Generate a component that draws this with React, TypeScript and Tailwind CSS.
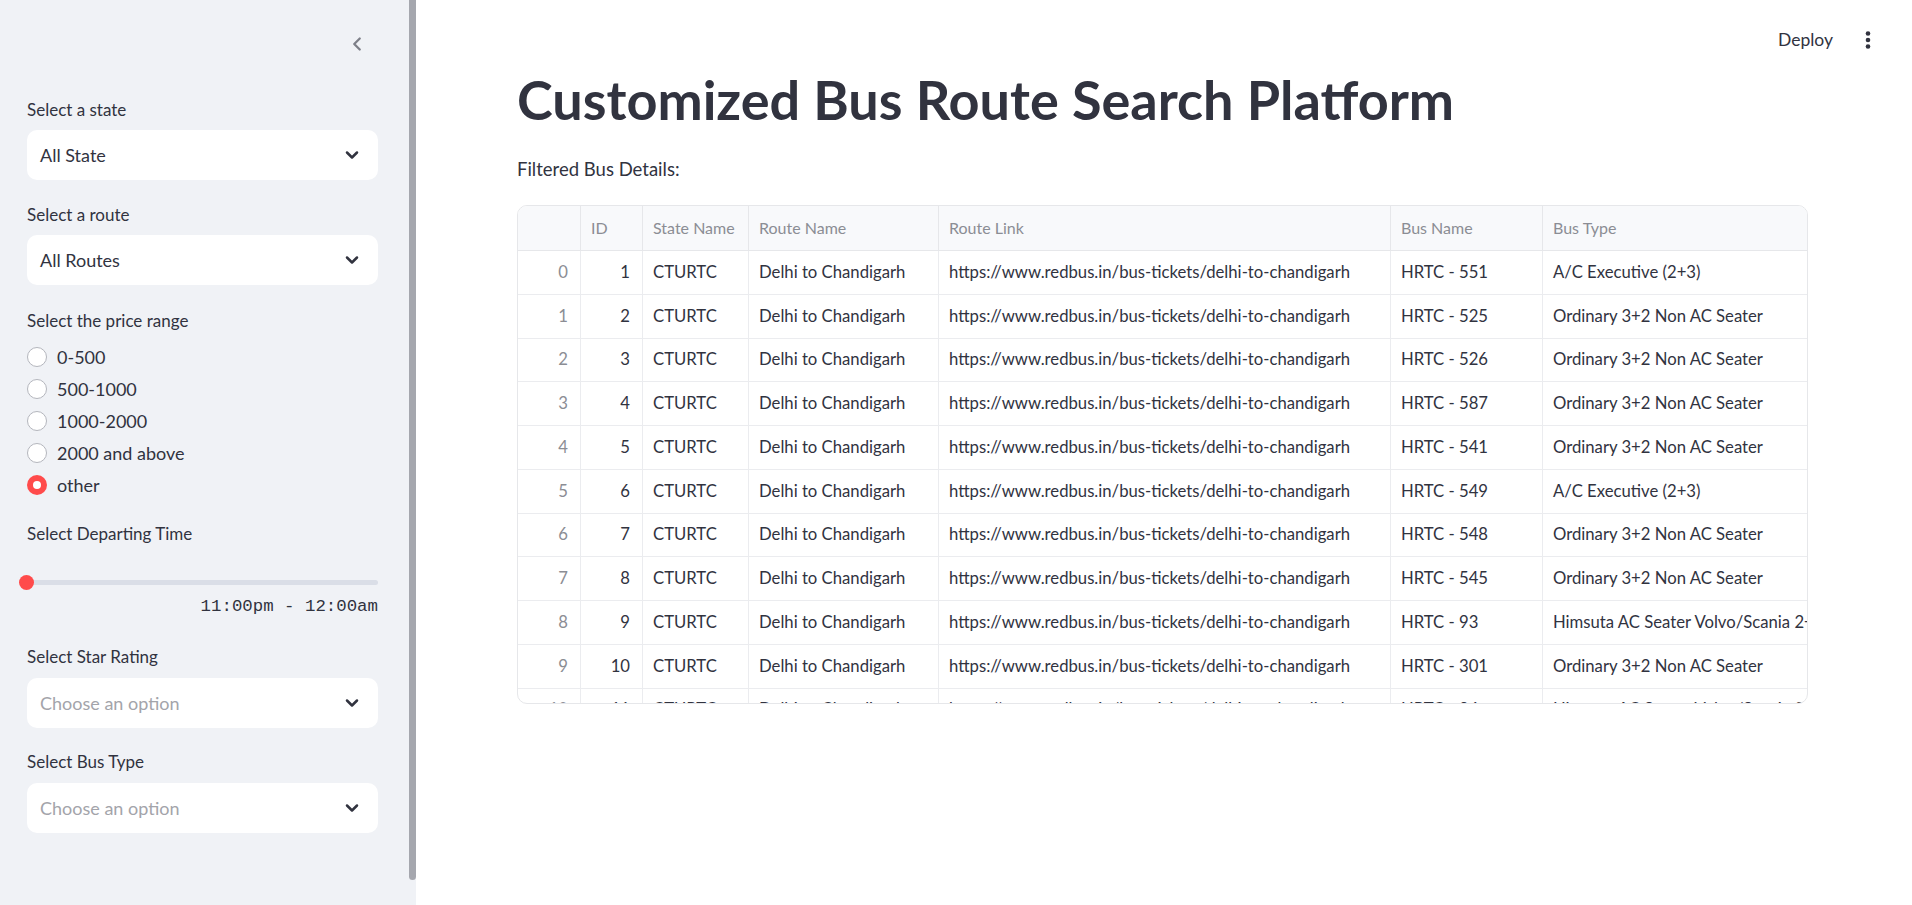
import React from "react";
import { ChevronLeft, ChevronDown } from "lucide-react";

const url = "https://www.redbus.in/bus-tickets/delhi-to-chandigarh";
const ordinary = "Ordinary 3+2 Non AC Seater";
const executive = "A/C Executive (2+3)";

const rows = [
  { bus: "HRTC - 551", type: executive },
  { bus: "HRTC - 525", type: ordinary },
  { bus: "HRTC - 526", type: ordinary },
  { bus: "HRTC - 587", type: ordinary },
  { bus: "HRTC - 541", type: ordinary },
  { bus: "HRTC - 549", type: executive },
  { bus: "HRTC - 548", type: ordinary },
  { bus: "HRTC - 545", type: ordinary },
  { bus: "HRTC - 93", type: "Himsuta AC Seater Volvo/Scania 2+2" },
  { bus: "HRTC - 301", type: ordinary },
  { bus: "HRTC - 94", type: "Himsuta AC Seater Volvo/Scania 2+2" },
];

const prices = ["0-500", "500-1000", "1000-2000", "2000 and above", "other"];

// --- sidebar pieces ---
const Label = ({ text, className = "" }: { text: string; className?: string }) => (
  <p className={`h-[22px] text-[17px] leading-[22px] text-[#31333f] ${className}`}>{text}</p>
);

const SelectBox = ({ value, placeholder = false, className = "" }: { value: string; placeholder?: boolean; className?: string }) => (
  <div className={`flex h-[50px] items-center justify-between rounded-[10px] bg-white pl-[13px] pr-[16px] ${className}`}>
    <span className={`text-[18px] ${placeholder ? "text-[#a3a4aa]" : "text-[#31333f]"}`}>{value}</span>
    <ChevronDown size={20} strokeWidth={3} className="text-[#31333f]" />
  </div>
);

const Radio = ({ label, checked }: { label: string; checked?: boolean }) => (
  <div className="flex h-[32px] items-center gap-[10px]">
    {checked ? (
      <span className="flex h-[20px] w-[20px] items-center justify-center rounded-full bg-[#ff4b4b]">
        <span className="h-[8px] w-[8px] rounded-full bg-white" />
      </span>
    ) : (
      <span className="h-[20px] w-[20px] rounded-full border border-[#b4b6bd] bg-white" />
    )}
    <span className="text-[18px] text-[#31333f]">{label}</span>
  </div>
);

const Sidebar = () => (
  <aside className="flex h-full w-[416px] shrink-0 bg-[#f0f2f6]">
    <div className="flex w-[409px] flex-col pl-[27px] pr-[31px]">
      <div className="flex h-[88px] items-center justify-end pr-[10px]">
        <ChevronLeft size={22} strokeWidth={2.5} className="text-[#7d7f88]" />
      </div>

      <Label text="Select a state" className="mt-[11px]" />
      <SelectBox value="All State" className="mt-[9px]" />

      <Label text="Select a route" className="mt-[24px]" />
      <SelectBox value="All Routes" className="mt-[9px]" />

      <Label text="Select the price range" className="mt-[25px]" />
      <div className="mt-[9px] flex flex-col">
        {prices.map((p) => (
          <Radio key={p} label={p} checked={p === "other"} />
        ))}
      </div>

      <Label text="Select Departing Time" className="mt-[22px]" />
      <div className="mt-[27px] flex h-[20px] items-center">
        <div className="relative h-[5px] w-full rounded-full bg-[#dadee7]">
          <span className="absolute -left-[8px] -top-[5px] h-[15px] w-[15px] rounded-full bg-[#ff4b4b]" />
        </div>
      </div>
      <p className="mt-[4px] h-[22px] text-right font-['Liberation_Mono',monospace] text-[17.4px] leading-[22px] text-[#31333f]">
        11:00pm - 12:00am
      </p>

      <Label text="Select Star Rating" className="mt-[28px]" />
      <SelectBox value="Choose an option" placeholder className="mt-[10px]" />

      <Label text="Select Bus Type" className="mt-[23px]" />
      <SelectBox value="Choose an option" placeholder className="mt-[10px]" />
    </div>
    <div className="w-[7px]">
      <div className="h-[880px] rounded-b-full bg-[#a5a7ae]" />
    </div>
  </aside>
);

// --- table ---
const cols = [
  { key: "idx", title: "", w: "w-[63px]" },
  { key: "id", title: "ID", w: "w-[62px]" },
  { key: "state", title: "State Name", w: "w-[106px]" },
  { key: "route", title: "Route Name", w: "w-[190px]" },
  { key: "link", title: "Route Link", w: "w-[452px]" },
  { key: "bus", title: "Bus Name", w: "w-[152px]" },
  { key: "type", title: "Bus Type", w: "w-[320px]" },
];

const DataTable = () => (
  <div className="mt-[24px] h-[499px] overflow-hidden rounded-[10px] border border-[#e6e7ea]">
    <div className="flex h-[45px] border-b border-[#e6e7ea] bg-[#f8f9fb]">
      {cols.map((c) => (
        <div
          key={c.key}
          className={`${c.w} flex shrink-0 items-center border-r border-[#e6e7ea] px-[10px] text-[16px] text-[#8b8d94] last:border-r-0`}
        >
          {c.title}
        </div>
      ))}
    </div>
    {rows.map((r, i) => (
      <div key={i} className="flex h-[43.75px] border-b border-[#ebecef] text-[16.7px] text-[#31333f]">
        <div className="flex w-[63px] shrink-0 items-center justify-end border-r border-[#ebecef] px-[12px] text-[#8b8d94]">{i}</div>
        <div className="flex w-[62px] shrink-0 items-center justify-end border-r border-[#ebecef] px-[12px]">{i + 1}</div>
        <div className="flex w-[106px] shrink-0 items-center border-r border-[#ebecef] px-[10px]">CTURTC</div>
        <div className="flex w-[190px] shrink-0 items-center border-r border-[#ebecef] px-[10px]">Delhi to Chandigarh</div>
        <div className="flex w-[452px] shrink-0 items-center border-r border-[#ebecef] px-[10px]">{url}</div>
        <div className="flex w-[152px] shrink-0 items-center border-r border-[#ebecef] px-[10px]">{r.bus}</div>
        <div className="flex w-[320px] shrink-0 items-center whitespace-nowrap px-[10px]">{r.type}</div>
      </div>
    ))}
  </div>
);

export default function App() {
  return (
    <div className="flex h-[905px] w-full overflow-hidden bg-white font-['Lato',sans-serif]">
      <Sidebar />
      <main className="flex min-w-0 flex-1 flex-col">
        <header className="mt-[28px] flex h-[24px] items-center justify-end gap-[24px] pr-[33px]">
          <span className="text-[17.5px] text-[#31333f]">Deploy</span>
          <svg width="22" height="22" viewBox="0 0 22 22" className="text-[#31333f]">
            <circle cx="11" cy="4.5" r="2.3" fill="currentColor" />
            <circle cx="11" cy="11" r="2.3" fill="currentColor" />
            <circle cx="11" cy="17.5" r="2.3" fill="currentColor" />
          </svg>
        </header>
        <div className="pl-[101px] pr-[104px]">
          <h1 className="mt-[17px] text-[54px] font-bold leading-[62px] text-[#31333f]">
            Customized Bus Route Search Platform
          </h1>
          <p className="mt-[26px] text-[18.5px] leading-[24px] text-[#31333f]">Filtered Bus Details:</p>
          <DataTable />
        </div>
      </main>
    </div>
  );
}
